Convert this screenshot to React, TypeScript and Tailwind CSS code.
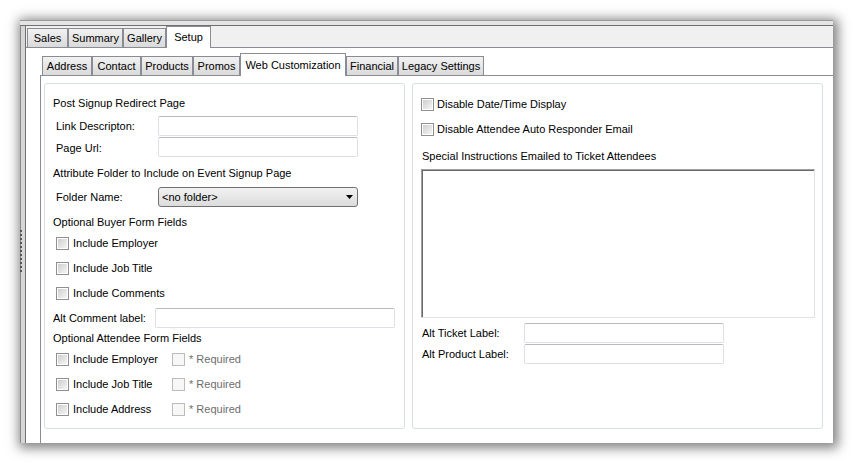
import React from "react";

// Win7-style form controls
function CheckBox({ disabled = false }: { disabled?: boolean }) {
  return (
    <div
      className={
        disabled
          ? "w-[13px] h-[13px] shrink-0 border border-[#bcbcbc] bg-[#f7f7f7]"
          : "w-[13px] h-[13px] shrink-0 border border-[#8e8f8f] bg-white p-[1px]"
      }
    >
      {!disabled && <div className="w-full h-full bg-gradient-to-br from-[#cfcfcf] to-[#f5f5f5]" />}
    </div>
  );
}

function TextBox({ className }: { className: string }) {
  return (
    <div
      className={
        "h-[20px] shrink-0 rounded-[2px] border border-[#dde0e6] border-t-[#b9bcc2] bg-white " + className
      }
    />
  );
}

function CheckRow({ label, required, mt }: { label: string; required?: boolean; mt: string }) {
  return (
    <div className={"flex h-[20px] items-center pl-[11px] " + mt}>
      <div className="flex w-[116px] items-center gap-[4px]">
        <CheckBox />
        <span>{label}</span>
      </div>
      {required && (
        <div className="flex items-center gap-[4px]">
          <CheckBox disabled />
          <span className="text-[#6d6d6d]">* Required</span>
        </div>
      )}
    </div>
  );
}

const outerTabs = [
  { name: "Sales", w: "w-[41px]" },
  { name: "Summary", w: "w-[55px]" },
  { name: "Gallery", w: "w-[43px]" },
];

const innerTabsLeft = [
  { name: "Address", w: "w-[50px]" },
  { name: "Contact", w: "w-[49px]" },
  { name: "Products", w: "w-[52px]" },
  { name: "Promos", w: "w-[47px]" },
];

const innerTabsRight = [
  { name: "Financial", w: "w-[52px]" },
  { name: "Legacy Settings", w: "w-[86px]" },
];

function Tab({ name, w }: { name: string; w: string }) {
  return (
    <div
      className={
        "flex h-[19px] items-center justify-center border border-b-0 border-[#898c95] bg-gradient-to-b from-[#f2f2f2] to-[#dadada] " +
        w
      }
    >
      {name}
    </div>
  );
}

export default function App() {
  return (
    <div className="w-[853px] h-[462px] bg-white p-[20px] font-['Liberation_Sans',Arial,sans-serif] text-[11px] text-black">
      <div className="flex flex-col w-[813px] h-[423px] bg-white shadow-[2px_2px_11px_3px_rgba(0,0,0,0.5)]">
        {/* window top frame */}
        <div className="h-[6px] shrink-0 bg-[#e4e4e4] border-t border-[#9a9a9a] border-b border-b-[#6f6f6f]" />
        <div className="flex flex-1 min-h-0">
          {/* left frame / splitter */}
          <div className="relative w-[6px] shrink-0 border-l border-[#8a8a8a] bg-[#d6d6d6] border-r border-r-[#6f6f6f]">
            <div className="absolute left-[-1px] top-[204px] h-[42px] w-[2px] border-l-2 border-dotted border-[#555]" />
          </div>

          {/* outer tab control */}
          <div className="flex flex-1 flex-col">
            <div className="flex h-[22px] shrink-0 items-end bg-[#f0f0f0] border-b border-[#898c95] pl-[1px]">
              {outerTabs.map((t) => (
                <Tab key={t.name} name={t.name} w={t.w} />
              ))}
              <div className="relative z-10 -mb-px flex h-[22px] w-[45px] items-center justify-center border border-b-0 border-[#898c95] bg-white">
                Setup
              </div>
            </div>

            {/* outer tab page */}
            <div className="flex flex-1 flex-col pt-[5px] pl-[14px]">
              <div className="flex h-[23px] shrink-0 items-end border-b border-[#898c95] pl-[2px]">
                {innerTabsLeft.map((t) => (
                  <Tab key={t.name} name={t.name} w={t.w} />
                ))}
                <div className="relative z-10 -mb-px flex h-[23px] w-[106px] items-center justify-center border border-b-0 border-[#898c95] bg-white">
                  Web Customization
                </div>
                {innerTabsRight.map((t) => (
                  <Tab key={t.name} name={t.name} w={t.w} />
                ))}
              </div>

              {/* inner tab page */}
              <div className="flex flex-1 gap-[7px] border-l border-[#898c95] pt-[7px] pl-[3px]">
                {/* left group */}
                <div className="flex flex-col w-[361px] h-[346px] rounded-[3px] border border-[#d5dfe5]">
                  <div className="mt-[9px] flex h-[20px] items-center pl-[8px]">Post Signup Redirect Page</div>
                  <div className="mt-[3px] flex h-[20px] items-center pl-[11px]">
                    <span className="w-[102px]">Link Descripton:</span>
                    <TextBox className="w-[200px]" />
                  </div>
                  <div className="mt-[1px] flex h-[20px] items-center pl-[11px]">
                    <span className="w-[102px] pt-[2px]">Page Url:</span>
                    <TextBox className="w-[200px]" />
                  </div>
                  <div className="mt-[6px] flex h-[20px] items-center pl-[8px]">
                    Attribute Folder to Include on Event Signup Page
                  </div>
                  <div className="mt-[4px] flex h-[20px] items-center pl-[11px]">
                    <span className="w-[102px]">Folder Name:</span>
                    <div className="flex h-[20px] w-[200px] items-center justify-between rounded-[3px] border border-[#707070] bg-gradient-to-b from-[#f2f2f2] to-[#dcdcdc] pl-[3px] pr-[4px]">
                      <span>&lt;no folder&gt;</span>
                      <svg width="7" height="4" viewBox="0 0 7 4">
                        <path d="M0 0h7L3.5 4z" fill="#000" />
                      </svg>
                    </div>
                  </div>
                  <div className="mt-[5px] flex h-[20px] items-center pl-[8px]">Optional Buyer Form Fields</div>
                  <CheckRow label="Include Employer" mt="mt-[1px]" />
                  <CheckRow label="Include Job Title" mt="mt-[5px]" />
                  <CheckRow label="Include Comments" mt="mt-[5px]" />
                  <div className="mt-[5px] flex h-[20px] items-center pl-[8px]">
                    <span className="w-[102px]">Alt Comment label:</span>
                    <TextBox className="w-[240px]" />
                  </div>
                  <div className="flex h-[20px] items-center pl-[8px]">Optional Attendee Form Fields</div>
                  <CheckRow label="Include Employer" required mt="mt-[1px]" />
                  <CheckRow label="Include Job Title" required mt="mt-[5px]" />
                  <CheckRow label="Include Address" required mt="mt-[5px]" />
                </div>

                {/* right group */}
                <div className="flex flex-col w-[411px] h-[346px] rounded-[3px] border border-[#d5dfe5]">
                  <div className="mt-[10px] flex h-[20px] items-center gap-[3px] pl-[8px]">
                    <CheckBox />
                    <span>Disable Date/Time Display</span>
                  </div>
                  <div className="mt-[5px] flex h-[20px] items-center gap-[3px] pl-[8px]">
                    <CheckBox />
                    <span>Disable Attendee Auto Responder Email</span>
                  </div>
                  <div className="mt-[7px] flex h-[20px] items-center pl-[9px]">
                    Special Instructions Emailed to Ticket Attendees
                  </div>
                  <div className="mt-[3px] ml-[8px] h-[149px] w-[394px] border border-[#a0a0a0] border-r-[#e3e3e3] border-b-[#e3e3e3] bg-white shadow-[inset_1px_1px_0_#696969]" />
                  <div className="mt-[5px] flex h-[20px] items-center pl-[9px]">
                    <span className="w-[102px]">Alt Ticket Label:</span>
                    <TextBox className="w-[200px]" />
                  </div>
                  <div className="mt-[1px] flex h-[20px] items-center pl-[9px]">
                    <span className="w-[102px]">Alt Product Label:</span>
                    <TextBox className="w-[200px]" />
                  </div>
                </div>
              </div>
            </div>
          </div>
        </div>
      </div>
    </div>
  );
}
